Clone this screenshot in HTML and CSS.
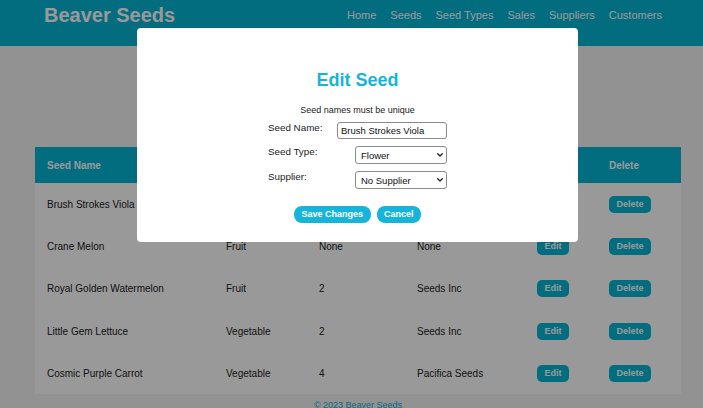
FILE: index.html
```html
<!DOCTYPE html>
<html lang="en">
<head>
<meta charset="utf-8">
<title>Beaver Seeds - Seeds</title>
<link rel="stylesheet" href="styles.css">
</head>
<body>
<header class="site-header">
  <div class="brand">Beaver Seeds</div>
  <nav class="nav">
    <a href="#">Home</a>
    <a href="#">Seeds</a>
    <a href="#">Seed Types</a>
    <a href="#">Sales</a>
    <a href="#">Suppliers</a>
    <a href="#">Customers</a>
  </nav>
</header>

<main class="content">
  <table class="seed-table">
    <colgroup>
      <col class="col-name">
      <col class="col-type">
      <col class="col-qty">
      <col class="col-supplier">
      <col class="col-edit">
      <col class="col-delete">
    </colgroup>
    <thead>
      <tr>
        <th>Seed Name</th>
        <th>Seed Type</th>
        <th>Quantity</th>
        <th>Supplier</th>
        <th>Edit</th>
        <th>Delete</th>
      </tr>
    </thead>
    <tbody>
      <tr>
        <td>Brush Strokes Viola</td>
        <td>Flower</td>
        <td>3</td>
        <td>None</td>
        <td><button class="row-btn">Edit</button></td>
        <td><button class="row-btn">Delete</button></td>
      </tr>
      <tr>
        <td>Crane Melon</td>
        <td>Fruit</td>
        <td>None</td>
        <td>None</td>
        <td><button class="row-btn">Edit</button></td>
        <td><button class="row-btn">Delete</button></td>
      </tr>
      <tr>
        <td>Royal Golden Watermelon</td>
        <td>Fruit</td>
        <td>2</td>
        <td>Seeds Inc</td>
        <td><button class="row-btn">Edit</button></td>
        <td><button class="row-btn">Delete</button></td>
      </tr>
      <tr>
        <td>Little Gem Lettuce</td>
        <td>Vegetable</td>
        <td>2</td>
        <td>Seeds Inc</td>
        <td><button class="row-btn">Edit</button></td>
        <td><button class="row-btn">Delete</button></td>
      </tr>
      <tr>
        <td>Cosmic Purple Carrot</td>
        <td>Vegetable</td>
        <td>4</td>
        <td>Pacifica Seeds</td>
        <td><button class="row-btn">Edit</button></td>
        <td><button class="row-btn">Delete</button></td>
      </tr>
    </tbody>
  </table>
</main>

<footer class="site-footer">© 2023 Beaver Seeds</footer>

<div class="overlay"></div>

<div class="modal">
  <h3 class="modal-title">Edit Seed</h3>
  <p class="modal-note">Seed names must be unique</p>
  <form class="modal-form">
    <div class="form-row">
      <label class="form-label">Seed Name:</label>
      <input class="text-input" type="text" value="Brush Strokes Viola">
    </div>
    <div class="form-row">
      <label class="form-label">Seed Type:</label>
      <span class="select-wrap">
        <select class="select-input">
          <option>Flower</option>
          <option>Fruit</option>
          <option>Vegetable</option>
        </select>
        <svg class="chevron" width="6" height="4" viewBox="0 0 6 4"><path d="M0.7 0.7 L3 3 L5.3 0.7" fill="none" stroke="#222" stroke-width="1.3" stroke-linecap="round" stroke-linejoin="round"/></svg>
      </span>
    </div>
    <div class="form-row">
      <label class="form-label">Supplier:</label>
      <span class="select-wrap">
        <select class="select-input">
          <option>No Supplier</option>
          <option>Seeds Inc</option>
          <option>Pacifica Seeds</option>
        </select>
        <svg class="chevron" width="6" height="4" viewBox="0 0 6 4"><path d="M0.7 0.7 L3 3 L5.3 0.7" fill="none" stroke="#222" stroke-width="1.3" stroke-linecap="round" stroke-linejoin="round"/></svg>
      </span>
    </div>
  </form>
  <div class="modal-actions">
    <button class="pill-btn">Save Changes</button>
    <button class="pill-btn">Cancel</button>
  </div>
</div>
</body>
</html>
```

FILE: styles.css
```css
html, body {
  overflow: hidden;
}

body {
  margin: 0;
  background: #f3f3f3;
  font-family: "Liberation Sans", Arial, sans-serif;
  color: #222;
}

.site-header {
  height: 46px;
  box-sizing: border-box;
  background: #05b6d6;
  display: flex;
  justify-content: space-between;
  align-items: flex-start;
  padding: 0 41px 0 44px;
}

.brand {
  color: #fff;
  font-size: 20px;
  font-weight: bold;
  line-height: 24px;
  padding-top: 3px;
}

.nav {
  display: flex;
  gap: 14px;
  padding-top: 7.5px;
}

.nav a {
  color: #fff;
  text-decoration: none;
  font-size: 11px;
  line-height: 14px;
}

.content {
  padding-top: 101px;
}

.seed-table {
  margin-left: 35px;
  width: 646px;
  border-collapse: collapse;
  table-layout: fixed;
  background: #fff;
}

.col-name { width: 179px; }
.col-type { width: 93px; }
.col-qty { width: 98px; }
.col-supplier { width: 120px; }
.col-edit { width: 72px; }
.col-delete { width: 84px; }

.seed-table th {
  height: 36px;
  padding: 0 12px;
  text-align: left;
  background: #05b6d6;
  color: #fff;
  font-size: 10px;
  font-weight: bold;
}

.seed-table td {
  height: 42.3px;
  padding: 0 12px;
  font-size: 10px;
  color: #222;
  white-space: nowrap;
}

.row-btn {
  display: inline-block;
  vertical-align: middle;
  height: 17px;
  padding: 0 7.5px;
  border: none;
  border-radius: 5px;
  background: #05b6d6;
  color: #fff;
  font-family: "Liberation Sans", Arial, sans-serif;
  font-size: 9px;
  font-weight: bold;
  line-height: 17px;
}

.site-footer {
  margin-left: 35px;
  width: 646px;
  margin-top: 6px;
  text-align: center;
  font-size: 9px;
  line-height: 11px;
  color: #05b6d6;
}

.overlay {
  position: fixed;
  inset: 0;
  background: rgba(0, 0, 0, 0.4);
}

.modal {
  position: fixed;
  top: 28px;
  left: 137px;
  width: 441px;
  height: 214px;
  box-sizing: border-box;
  background: #fff;
  border-radius: 4px;
  padding-top: 41px;
  display: flex;
  flex-direction: column;
  align-items: center;
}

.modal-title {
  margin: 0;
  font-size: 18px;
  line-height: 22px;
  font-weight: bold;
  color: #16b4da;
}

.modal-note {
  margin: 14px 0 0 0;
  font-size: 9px;
  line-height: 11px;
  color: #222;
}

.modal-form {
  margin-top: 6px;
  width: 179px;
  display: flex;
  flex-direction: column;
  gap: 7px;
}

.form-row {
  display: flex;
  justify-content: space-between;
  align-items: flex-start;
}

.form-label {
  font-size: 9.8px;
  line-height: 12px;
  color: #222;
}

.text-input {
  width: 110px;
  height: 17px;
  box-sizing: border-box;
  margin: 0;
  border: 1px solid #8a8a8a;
  border-radius: 3px;
  padding: 0 3px;
  font-family: "Liberation Sans", Arial, sans-serif;
  font-size: 9.5px;
  color: #111;
  background: #fff;
}

.select-wrap {
  position: relative;
  display: block;
  width: 92px;
  height: 18px;
}

.select-input {
  appearance: none;
  -webkit-appearance: none;
  display: block;
  width: 100%;
  height: 100%;
  box-sizing: border-box;
  margin: 0;
  border: 1px solid #8a8a8a;
  border-radius: 3px;
  padding: 0 0 0 5px;
  background: #fff;
  font-family: "Liberation Sans", Arial, sans-serif;
  font-size: 9.5px;
  color: #111;
}

.chevron {
  position: absolute;
  right: 4px;
  top: 7px;
  pointer-events: none;
}

.modal-actions {
  margin-top: 17px;
  display: flex;
  gap: 6px;
}

.pill-btn {
  height: 17px;
  padding: 0 7.5px;
  border: none;
  border-radius: 8px;
  background: #16b4da;
  color: #fff;
  font-family: "Liberation Sans", Arial, sans-serif;
  font-size: 9px;
  font-weight: bold;
  line-height: 17px;
}
```
